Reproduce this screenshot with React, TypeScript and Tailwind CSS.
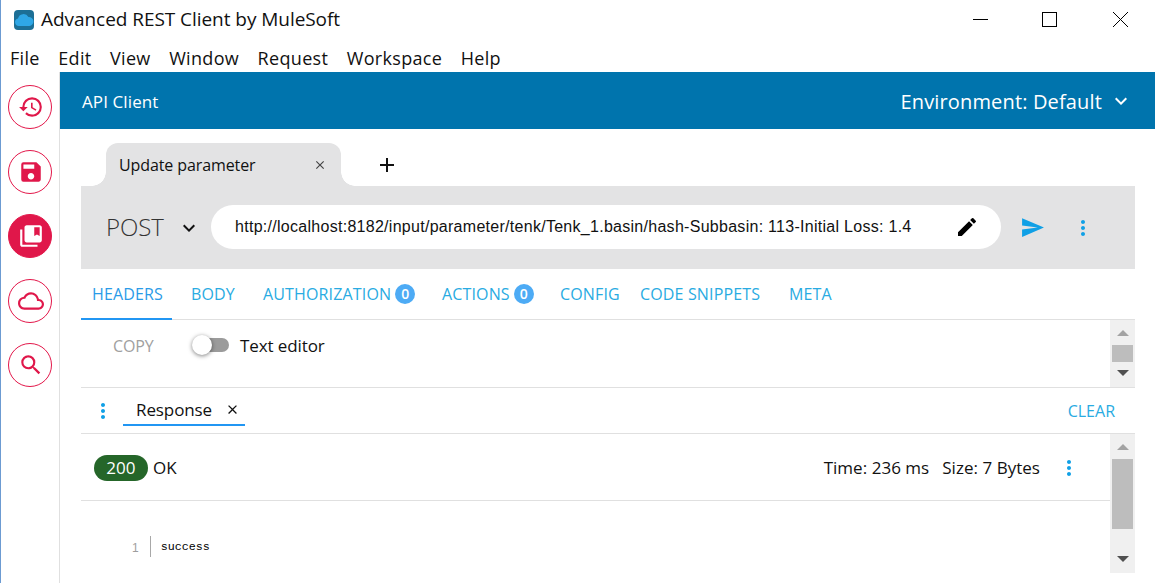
import React from "react";
import {
  MdHistory, MdSave, MdCollectionsBookmark, MdCloudQueue, MdSearch, MdEdit, MdSend, MdMoreVert,
  MdKeyboardArrowDown, MdClose, MdAdd,
} from "react-icons/md";

const FONT = "font-['Open_Sans','Noto_Sans',sans-serif]";

function SideButton({ icon, active }: { icon: React.ReactNode; active?: boolean }) {
  return (
    <div
      className={
        "w-[44px] h-[44px] rounded-full flex items-center justify-center border border-[#e3174a] text-[26px] pl-[2px] " +
        (active ? "bg-[#e0174a] text-white" : "text-[#e0174a]")
      }
    >
      {icon}
    </div>
  );
}

function Tab({ label, badge, active, w }: { label: string; badge?: boolean; active?: boolean; w: string }) {
  return (
    <div
      className={
        "h-[51px] flex items-center gap-[4px] text-[16px] tracking-[0.15px] border-b-2 -mb-px " +
        (active ? "border-[#2196f3] text-[#2b9be8] " : "border-transparent text-[#29abe2] ") +
        w
      }
    >
      <span>{label}</span>
      {badge && (
        <span className="w-[20px] h-[20px] rounded-full bg-[#4dabf5] text-white text-[14px] font-semibold flex items-center justify-center tracking-normal">
          0
        </span>
      )}
    </div>
  );
}

function Scrollbar({ thumb, before }: { thumb: string; before: string }) {
  return (
    <div className="w-[25px] shrink-0 bg-[#f0f0f0] flex flex-col items-center">
      <div className={"flex items-center justify-center w-full " + before}>
        <div className="w-0 h-0 border-l-[6px] border-r-[6px] border-b-[6px] border-l-transparent border-r-transparent border-b-[#a3a3a3]" />
      </div>
      <div className={"w-[21px] bg-[#bdbdbd] " + thumb} />
      <div className="flex-1 flex items-end justify-center w-full pb-[11px]">
        <div className="w-0 h-0 border-l-[6px] border-r-[6px] border-t-[6px] border-l-transparent border-r-transparent border-t-[#505050]" />
      </div>
    </div>
  );
}

export default function App() {
  return (
    <div className={"w-[1155px] h-[583px] overflow-hidden bg-white border-l border-[#6c9bd2] flex flex-col text-[#111] " + FONT}>
      <div className="h-[40px] flex items-center shrink-0 pb-[1px]">
        <svg width="20" height="20" viewBox="0 0 20 20" className="ml-[13px] mr-[7px]">
          <rect width="20" height="20" rx="4" fill="#1c6f96" />
          <path d="M4.8 16 a3.8 3.8 0 0 1-.8-7.5 A5.6 5.6 0 0 1 14.4 7 a4.4 4.4 0 0 1 1 9 z" fill="#2fa7e6" />
        </svg>
        <span className="text-[19px] tracking-[-0.05px]">Advanced REST Client by MuleSoft</span>
        <div className="ml-auto flex items-center">
          <div className="w-[15px] h-px bg-black mr-[54px]" />
          <div className="w-[15px] h-[15px] border border-black mr-[56px]" />
          <svg width="15" height="15" viewBox="0 0 15 15" className="mr-[27px]">
            <path d="M0 0L15 15M15 0L0 15" stroke="#000" strokeWidth="1" />
          </svg>
        </div>
      </div>
      <div className="h-[32px] flex items-center shrink-0 text-[18px] tracking-[0.32px] pl-[9px] pt-[4px] gap-[18.5px]">
        <span>File</span>
        <span>Edit</span>
        <span>View</span>
        <span>Window</span>
        <span>Request</span>
        <span>Workspace</span>
        <span>Help</span>
      </div>
      <div className="flex-1 flex min-h-0">
        <div className="w-[59px] shrink-0 border-r border-[#e0e0e0] flex flex-col items-center pt-[13px] gap-[20.5px] pr-[1px]">
          <SideButton icon={<MdHistory />} />
          <SideButton icon={<MdSave />} />
          <SideButton active icon={<MdCollectionsBookmark />} />
          <SideButton icon={<MdCloudQueue />} />
          <SideButton icon={<MdSearch />} />
        </div>
        <div className="flex-1 flex flex-col min-w-0">
          <div className="h-[57px] bg-[#0074ad] shrink-0 flex items-center justify-between text-white pl-[22px] pr-[22px]">
            <span className="text-[17px] tracking-[0.1px] pt-[2px]">API Client</span>
            <div className="flex items-center gap-[7px]">
              <span className="text-[20px] tracking-[0.15px] pt-[2px]">Environment: Default</span>
              <MdKeyboardArrowDown className="text-[24px]" />
            </div>
          </div>
          <div className="flex-1 flex flex-col pl-[21px] pr-[20px] min-h-0">
            <div className="h-[57px] pl-[25px] pt-[14px] flex items-start shrink-0">
              <div className="relative w-[235px] h-[43px] bg-[#e3e3e4] rounded-t-[12px] flex items-center pl-[13px] pr-[14px] justify-between">
                <div className="absolute left-[-14px] bottom-0 w-[14px] h-[14px] bg-[radial-gradient(circle_at_0_0,#fff_13.5px,#e3e3e4_14px)]" />
                <div className="absolute right-[-14px] bottom-0 w-[14px] h-[14px] bg-[radial-gradient(circle_at_100%_0,#fff_13.5px,#e3e3e4_14px)]" />
                <span className="text-[16px] tracking-[-0.1px]">Update parameter</span>
                <MdClose className="text-[14px] text-[#444]" />
              </div>
              <MdAdd className="text-[24px] ml-[34px] mt-[10px] text-[#111]" />
            </div>
            <div className="h-[83px] bg-[#e3e3e4] shrink-0 flex items-center pl-[25px] pb-[2px]">
              <span className="text-[24px] font-light text-[#333] tracking-[-0.1px] w-[73px]">POST</span>
              <MdKeyboardArrowDown className="text-[24px] text-[#111] -ml-[2px] mt-[2px]" />
              <div className="ml-[10px] w-[790px] h-[44px] bg-white rounded-full flex items-center pl-[24px] pr-[22px] justify-between">
                <span className="font-['Liberation_Sans',sans-serif] text-[16px] tracking-[0.28px] whitespace-nowrap">
                  http://localhost:8182/input/parameter/tenk/Tenk_1.basin/hash-Subbasin: 113-Initial Loss: 1.4
                </span>
                <MdEdit className="text-[24px] text-black" />
              </div>
              <MdSend className="text-[25px] text-[#10a0e6] ml-[19px] mt-[2px]" />
              <MdMoreVert className="text-[24px] text-[#10a0e6] ml-[26px] mt-[2px]" />
            </div>
            <div className="h-[51px] shrink-0 flex items-center border-b border-[#e0e0e0]">
              <Tab active label="HEADERS" w="w-[91px] pl-[11px]" />
              <Tab label="BODY" w="w-[77px] pl-[19px]" />
              <Tab label="AUTHORIZATION" badge w="w-[179px] pl-[14px]" />
              <Tab label="ACTIONS" badge w="w-[118px] pl-[14px]" />
              <Tab label="CONFIG" w="w-[84px] pl-[14px]" />
              <Tab label="CODE SNIPPETS" w="w-[145px] pl-[10px]" />
              <Tab label="META" w="w-[80px] pl-[14px]" />
            </div>
            <div className="h-[68px] shrink-0 flex border-b border-[#e0e0e0]">
              <div className="flex-1 flex items-start pt-[13px] pl-[32px]">
                <span className="text-[16px] text-[#a0a0a0] tracking-[-0.1px] w-[78px] mt-[1px]">COPY</span>
                <div className="relative w-[36px] h-[14px] mt-[5px] ml-[2px] rounded-full bg-[#9b9b9b]">
                  <div className="absolute -left-[1px] -top-[3px] w-[20px] h-[20px] rounded-full bg-white shadow-[0_1px_4px_rgba(0,0,0,0.5)]" />
                </div>
                <span className="text-[17px] ml-[11px] tracking-[-0.1px]">Text editor</span>
              </div>
              <Scrollbar before="h-[25px]" thumb="h-[17px]" />
            </div>
            <div className="h-[46px] shrink-0 flex items-start border-b border-[#e0e0e0]">
              <MdMoreVert className="text-[24px] text-[#10a0e6] ml-[10px] mt-[11px]" />
              <div className="ml-[8px] h-[32px] w-[122px] border-b-2 border-[#2196f3] flex items-center pl-[13px] mt-[6px]">
                <span className="text-[17px] tracking-[-0.1px] pt-[2px]">Response</span>
                <MdClose className="text-[15px] ml-[13px] text-[#111]" />
              </div>
              <span className="ml-auto mr-[20px] text-[16px] text-[#29abe2] mt-[11px]">CLEAR</span>
            </div>
            <div className="h-[139px] shrink-0 flex">
              <div className="flex-1 flex flex-col min-w-0">
                <div className="h-[67px] flex items-center border-b border-[#e0e0e0] pl-[13px] pr-[29px] pt-[2px] text-[17px] tracking-[0.03px]">
                  <span className="w-[54px] h-[26px] rounded-full bg-[#256629] text-white flex items-center justify-center">
                    200
                  </span>
                  <span className="ml-[5px]">OK</span>
                  <span className="ml-auto">Time: 236 ms</span>
                  <span className="ml-[13px]">Size: 7 Bytes</span>
                  <MdMoreVert className="text-[24px] text-[#10a0e6] ml-[17px]" />
                </div>
                <div className="flex-1 flex items-start pl-[51px] pt-[35px]">
                  <span className="text-[12px] text-[#9e9e9e] font-['Liberation_Sans',sans-serif] mt-[3px]">1</span>
                  <div className="w-px h-[21px] bg-[#a8a8a8] ml-[11px] mr-[10px]" />
                  <span className="font-['Liberation_Mono',monospace] text-[11.7px] text-black mt-[3px]">success</span>
                </div>
              </div>
              <Scrollbar before="h-[25px]" thumb="h-[70px]" />
            </div>
            <div className="flex-1" />
          </div>
        </div>
      </div>
    </div>
  );
}
